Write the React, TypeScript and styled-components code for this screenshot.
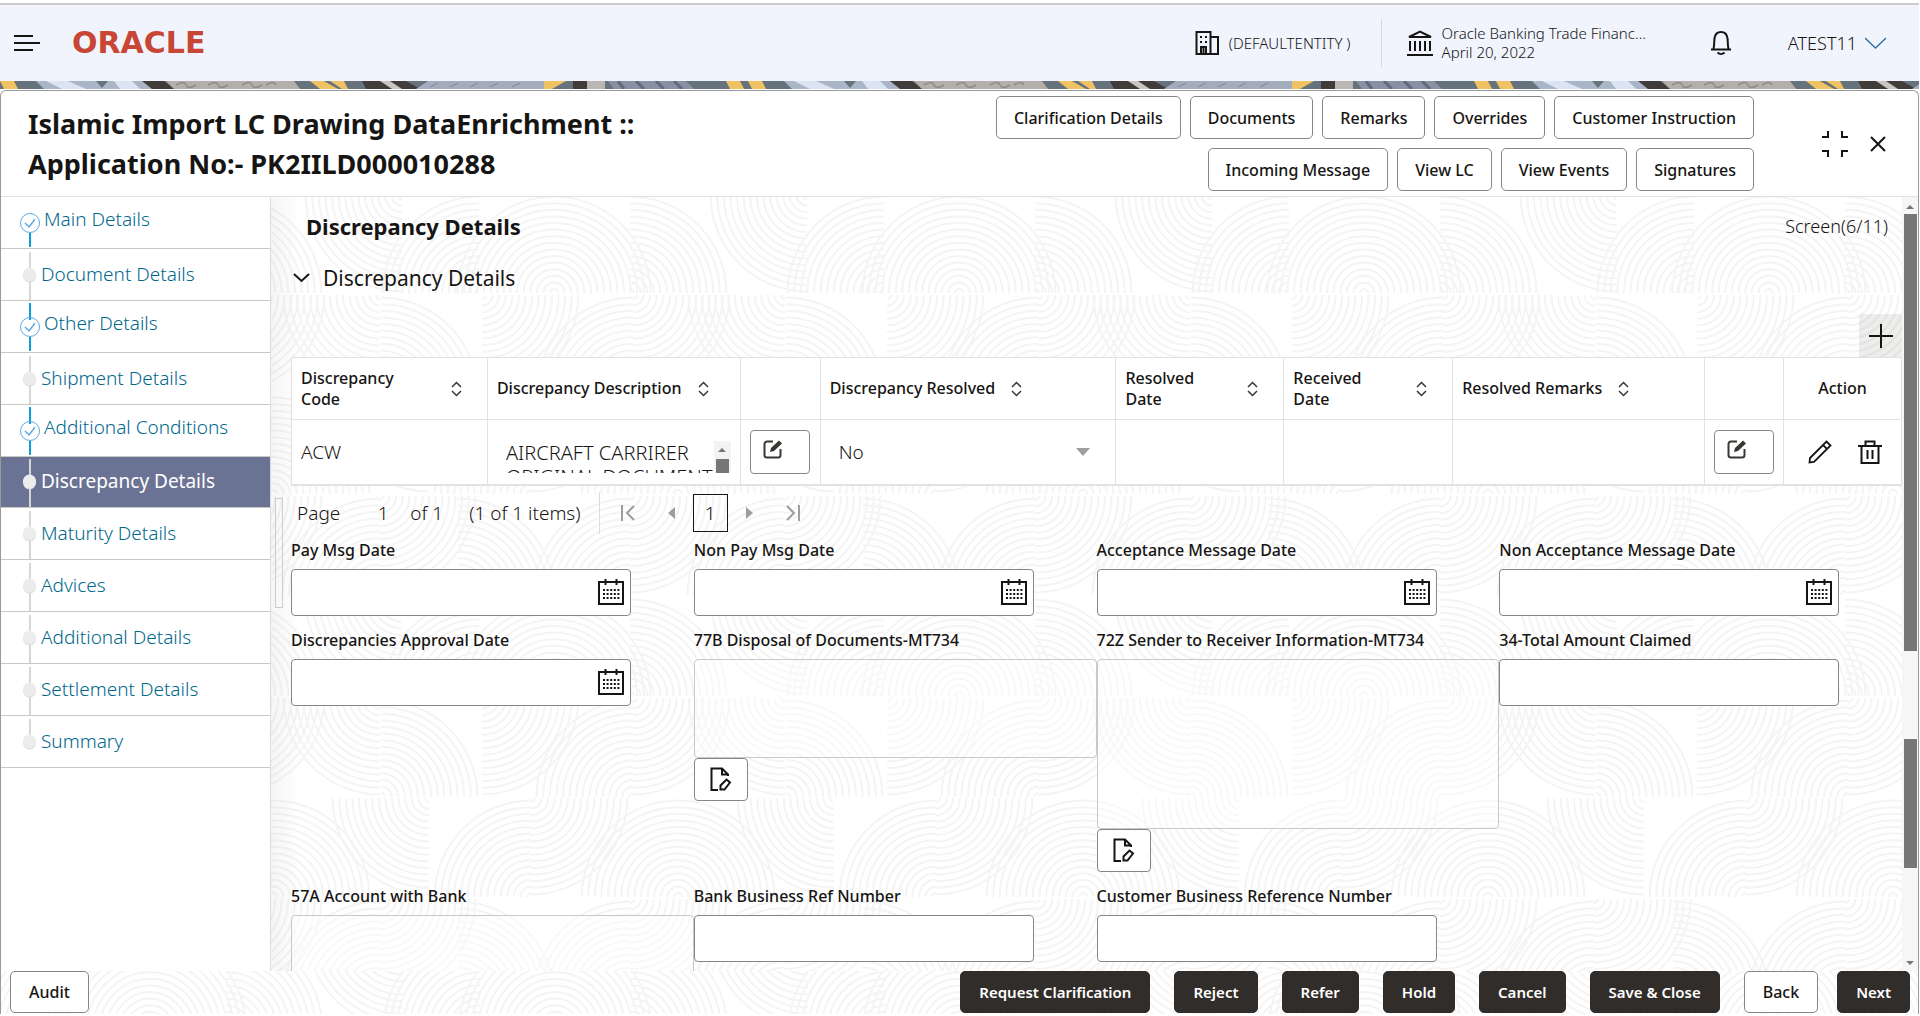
import React from 'react';
import styled, { createGlobalStyle, css } from 'styled-components';

/* ---------- decorative line pattern ---------- */

type Corner = 'ul' | 'ur' | 'dl' | 'dr';

const arcs = (cx: number, cy: number, corner: Corner) => {
  const sx = corner[1] === 'l' ? -1 : 1;
  const sy = corner[0] === 'u' ? -1 : 1;
  const sweep = sx * sy > 0 ? 1 : 0;
  let d = '';
  for (let r = 4; r < 100; r += 6.6) {
    d += `M${cx + sx * r} ${cy}A${r} ${r} 0 0 ${sweep} ${cx} ${cy + sy * r}`;
  }
  return d;
};

const quarters: [number, number, Corner][] = [
  [149, 98, 'ul'], [149, 98, 'ur'], [225, 98, 'ur'], [402, 0, 'dl'], [74, 98, 'ul'],
  [77, 100, 'dr'], [228, 199, 'ul'], [228, 100, 'dr'], [380, 100, 'dl'], [381, 199, 'ur'],
  [273, 299, 'ul'], [273, 299, 'ur'], [24, 200, 'dl'], [126, 299, 'ul'], [126, 200, 'dr'],
  [225, 301, 'dr'], [379, 400, 'ul'], [379, 301, 'dr'], [53, 400, 'ur'], [225, 400, 'ul'],
];

const tile = 405;
const patternPath = quarters
  .map(([x, y, c]) => arcs(x, y, c) + arcs(x - tile, y, c) + arcs(x + tile, y, c))
  .join('');
const pattern = `url("data:image/svg+xml,${encodeURIComponent(
  `<svg xmlns="http://www.w3.org/2000/svg" width="${tile}" height="403"><path d="${patternPath}" fill="none" stroke="#f4f4f4" stroke-width="2"/></svg>`
)}")`;

const Global = createGlobalStyle`
  * { box-sizing: border-box; }
  html, body, #root { height: 100%; }
  body {
    margin: 0;
    background: #fff;
    color: #161513;
    font-family: 'Noto Sans', 'Open Sans', sans-serif;
    font-size: 16px;
    overflow: hidden;
  }
  button, input, textarea, select { font: inherit; color: inherit; margin: 0; }
  h1, h2, h3, p { margin: 0; }
`;

/* ---------- frame ---------- */

const Page = styled.div`
  display: flex;
  flex-direction: column;
  height: 100vh;
  padding: 3px 1px 2px 0;
`;

const TopBar = styled.header`
  display: flex;
  align-items: center;
  flex: none;
  height: 78px;
  padding: 0 33px 0 14px;
  background: #f1f4fd;
  border-top: 2px solid #ccc;
`;

const IconButton = styled.button`
  display: inline-flex;
  align-items: center;
  justify-content: center;
  padding: 0;
  border: 0;
  background: none;
`;

const Logo = styled.span`
  flex: 1;
  margin-left: 32px;
  color: #c74634;
  font: 700 30px/32px 'DejaVu Sans', sans-serif;
`;

const Entity = styled.div`
  display: flex;
  align-items: center;
  gap: 10px;
  height: 48px;
  padding-right: 30px;
  border-right: 1px solid #d5d8e0;
  font-size: 15px;
  font-weight: 300;
`;

const Bank = styled.div`
  display: flex;
  align-items: center;
  gap: 9px;
  margin: 0 64px 0 25px;
  font-size: 15px;
  font-weight: 300;
  line-height: 19px;
`;

const User = styled.button`
  display: flex;
  align-items: center;
  gap: 8px;
  margin-left: 56px;
  padding: 0;
  border: 0;
  background: none;
  font-size: 18px;
  font-weight: 300;
`;

const Strip = styled.svg`
  display: block;
  flex: none;
  width: 100%;
  height: 8px;
`;

const Card = styled.div`
  display: flex;
  flex-direction: column;
  flex: 1;
  min-height: 0;
  border: 1px solid #9a9a9a;
  border-bottom: 0;
  border-radius: 6px 6px 0 0;
  margin-top: 1px;
`;

const CardHeader = styled.div`
  display: flex;
  align-items: center;
  flex: none;
  height: 106px;
  padding: 0 32px 0 27px;
  border-bottom: 1px solid #e2e2e2;
`;

const Title = styled.h1`
  flex: 1;
  max-width: 650px;
  font-size: 27px;
  font-weight: 700;
  line-height: 40px;
`;

const HeaderActions = styled.div`
  display: flex;
  flex-direction: column;
  gap: 9px;
  margin-left: auto;
  margin-right: 68px;
`;

const ActionRow = styled.div`
  display: flex;
  justify-content: flex-end;
  gap: 9px;
`;

const Button = styled.button<{ $dark?: boolean; $tight?: boolean }>`
  height: ${(p) => (p.$tight ? 42 : 43)}px;
  padding: 0 ${(p) => (p.$tight ? 18 : 17)}px;
  border: 1px solid #8b8580;
  border-radius: 5px;
  background: ${(p) => (p.$dark ? '#312d2a' : '#fff')};
  color: ${(p) => (p.$dark ? '#fff' : '#161513')};
  font-size: ${(p) => (p.$dark ? 15 : 16)}px;
  font-weight: ${(p) => (p.$dark ? 600 : 500)};
  white-space: nowrap;
  ${(p) => p.$dark && css`border-color: #312d2a;`}
`;

const WindowTools = styled.div`
  display: flex;
  align-items: center;
  gap: 22px;
`;

const Body = styled.div`
  display: flex;
  flex: 1;
  min-height: 0;
`;

/* ---------- side navigation ---------- */

const Nav = styled.nav`
  flex: none;
  width: 270px;
  border-right: 1px solid #d7dce6;
`;

const NavItem = styled.a<{ $active?: boolean; $done?: boolean }>`
  display: flex;
  align-items: center;
  gap: ${(p) => (p.$done ? 4 : 1)}px;
  height: ${(p) => (p.$active ? 51 : 52)}px;
  padding-left: 17px;
  border-bottom: 1px solid #c9c9c4;
  background: ${(p) => (p.$active ? '#6b7394' : '#fff')};
  color: ${(p) => (p.$active ? '#fff' : '#00688c')};
  font-size: 19px;
  font-weight: ${(p) => (p.$active ? 400 : 300)};
  text-decoration: none;
  span { padding-bottom: ${(p) => (p.$done ? 8 : 2)}px; }
`;

/* ---------- content ---------- */

const Main = styled.main`
  position: relative;
  flex: 1;
  min-width: 0;
  padding: 0 0 0 20px;
  overflow: hidden;
  background: linear-gradient(to right, rgba(120, 120, 120, 0.07), transparent 30px), ${pattern} -271px -2px, #fff;
`;

const Splitter = styled.div`
  position: absolute;
  left: 4px;
  top: 301px;
  width: 8px;
  height: 110px;
  border: 1px solid #ccc;
`;

const Heading = styled.div`
  display: flex;
  justify-content: space-between;
  align-items: center;
  height: 58px;
  padding: 0 14px 0 15px;
`;

const SectionTitle = styled.h2`
  font-size: 22px;
  font-weight: 700;
  line-height: 28px;
`;

const ScreenCount = styled.span`
  font-size: 18px;
  font-weight: 300;
`;

const Panel = styled.button`
  display: flex;
  align-items: center;
  gap: 13px;
  height: 46px;
  padding: 0 0 0 2px;
  border: 0;
  background: none;
  font-size: 21px;
  font-weight: 400;
`;

const TableTools = styled.div`
  display: flex;
  justify-content: flex-end;
  padding-top: 13px;
`;

const AddButton = styled(IconButton)`
  width: 43px;
  height: 43px;
  border-radius: 4px 4px 0 0;
  background: rgba(22, 21, 19, 0.08);
`;

const Table = styled.table`
  width: 100%;
  table-layout: fixed;
  border-collapse: collapse;
  background: #fff;
  border: 1px solid #e2e2e2;
  border-bottom: 2px solid #e2e2e2;
  th, td {
    padding: 0 9px;
    border-right: 1px solid #e2e2e2;
    border-bottom: 1px solid #e2e2e2;
    text-align: left;
  }
  th { height: 62px; font-size: 16px; font-weight: 500; line-height: 21px; }
  td { height: 65px; font-size: 19px; font-weight: 300; }
`;

const HeadCell = styled.div<{ $spread?: boolean; $center?: boolean }>`
  display: flex;
  align-items: center;
  gap: ${(p) => (p.$spread ? 32 : 16)}px;
  justify-content: ${(p) => (p.$center ? 'center' : p.$spread ? 'space-between' : 'flex-start')};
  padding-right: ${(p) => (p.$spread ? 16 : 0)}px;
  svg { flex: none; }
`;

const DescBox = styled.div`
  display: flex;
  height: 32px;
  margin-top: 10px;
  padding-left: 9px;
`;

const DescText = styled.textarea`
  flex: 1;
  min-width: 0;
  padding: 0;
  border: 0;
  background: none;
  resize: none;
  overflow: hidden;
  font-size: 20px;
  line-height: 24px;
  white-space: pre;
`;

const MiniScroll = styled.div`
  display: flex;
  flex-direction: column;
  align-items: center;
  gap: 7px;
  width: 17px;
  padding-top: 7px;
  background: #f3f3f3;
  &::before {
    content: '';
    border: 4px solid transparent;
    border-top: 0;
    border-bottom-color: #777;
  }
  &::after {
    content: '';
    flex: 1;
    width: 13px;
    background: #777;
  }
`;

const EditButton = styled.button`
  display: flex;
  align-items: center;
  width: 60px;
  height: 44px;
  padding: 0 0 4px 12px;
  border: 1px solid #8b8580;
  border-radius: 4px;
  background: #fff;
`;

const SelectWrap = styled.div`
  display: grid;
  align-items: center;
  padding: 0 16px 0 9px;
  > * { grid-area: 1 / 1; }
  > svg { justify-self: end; pointer-events: none; }
`;

const Select = styled.select`
  appearance: none;
  width: 100%;
  padding: 0;
  border: 0;
  background: none;
`;

const RowActions = styled.div`
  display: flex;
  gap: 26px;
  padding-left: 15px;
`;

const Pager = styled.div`
  display: flex;
  align-items: center;
  height: 54px;
  padding-left: 6px;
  font-size: 19px;
  font-weight: 300;
`;

const PageInput = styled.input`
  width: 70px;
  padding: 0 0 0 16px;
  border: 0;
  background: none;
  text-align: center;
`;

const PagerTotal = styled.span`
  margin-left: 26px;
`;

const PagerLinks = styled.div`
  display: flex;
  align-items: center;
  gap: 28px;
  height: 42px;
  margin-left: 18px;
  padding-left: 20px;
  border-left: 1px solid #ddd;
`;

const PagerGroup = styled.div`
  display: flex;
  align-items: center;
  gap: 13px;
`;

const PagerButton = styled(IconButton)`
  width: 16px;
  height: 34px;
`;

const PageNumber = styled(IconButton)`
  width: 35px;
  height: 38px;
  border: 1px solid #161513;
`;

const Form = styled.div`
  display: grid;
  grid-template-columns: repeat(4, 1fr);
  row-gap: 14px;
  align-items: start;
`;

const Field = styled.div`
  display: flex;
  flex-direction: column;
  align-items: flex-start;
`;

const Label = styled.label`
  margin-bottom: 8px;
  font-size: 16px;
  font-weight: 500;
  line-height: 21px;
  white-space: nowrap;
`;

const InputBox = styled.div`
  display: flex;
  align-items: center;
  width: 340px;
  max-width: 100%;
  height: 47px;
  padding: 0 6px;
  border: 1px solid #8b8580;
  border-radius: 4px;
  background: #fff;
`;

const Input = styled.input`
  flex: 1;
  min-width: 0;
  border: 0;
  background: none;
`;

const Area = styled.textarea<{ $height: number }>`
  display: block;
  width: 100%;
  height: ${(p) => p.$height}px;
  border: 1px solid #cbc8c6;
  border-radius: 4px;
  background: rgba(255, 255, 255, 0.4);
  resize: none;
`;

const NoteButton = styled(IconButton)`
  width: 54px;
  height: 43px;
  border: 1px solid #8b8580;
  border-radius: 4px;
  background: #fff;
`;

/* ---------- scrollbar ---------- */

const Rail = styled.div`
  display: flex;
  flex-direction: column;
  align-items: center;
  flex: none;
  width: 16px;
  padding: 8px 0 6px;
  background: #f6f6f6;
`;

const Thumb = styled.div<{ $grow: number }>`
  flex: ${(p) => p.$grow} 0 0;
  width: 13px;
  background: #777;
`;

const Space = styled.div<{ $grow: number }>`
  flex: ${(p) => p.$grow} 0 0;
`;

const Arrow = styled.i<{ $down?: boolean }>`
  flex: none;
  margin: ${(p) => (p.$down ? '0' : '0 0 5px')};
  border: 4px solid transparent;
  ${(p) =>
    p.$down
      ? css`border-bottom: 0; border-top-color: #777;`
      : css`border-top: 0; border-bottom-color: #777;`}
`;

/* ---------- footer ---------- */

const Footer = styled.footer`
  display: flex;
  align-items: flex-start;
  flex: none;
  height: 43px;
  padding: 0 8px 0 9px;
  background: ${pattern} 0 -40px, #fff;
`;

const FooterActions = styled.div`
  display: flex;
  gap: 24px;
  margin-left: auto;
`;

const Pair = styled.div`
  display: flex;
  gap: 19px;
`;

/* ---------- icons ---------- */

const line = { fill: 'none', stroke: '#161513', strokeWidth: 2 } as const;

const MenuIcon = () => (
  <svg width="26" height="18" {...line}><path d="M0 2h19M0 9h26M0 16h19" /></svg>
);

const BuildingIcon = () => (
  <svg width="24" height="24" {...line}>
    <path d="M1.5 1h14v22h-14zM15.5 6H23v17h-7.500M6 23v-7h5v7M8.500 17v6" />
    <path d="M5 6h2M10 6h2M5 11h2M10 11h2" />
  </svg>
);

const BankIcon = () => (
  <svg width="26" height="26" {...line}>
    <path d="M2 7 13 1.500 24 7zM0 25h26M3 11v10M8 11v10M13 11v10M18 11v10M23 11v10" />
  </svg>
);

const BellIcon = () => (
  <svg width="22" height="26" {...line}>
    <path d="M1 19.500h20M3.500 19c1-4 .5-7 1-10.500C5 4 8 2 11 2s6 2 6.500 6.500c.5 3.500 0 6.500 1 10.500M7.500 22.500c2 2 5 2 7 0" />
  </svg>
);

const SortIcon = () => (
  <svg width="11" height="16" fill="none" stroke="#3a3733" strokeWidth="1.500">
    <path d="M1 6l4.500-4.500L10 6M1 10l4.500 4.500L10 10" />
  </svg>
);

const EditIcon = () => (
  <svg width="20" height="21" fill="none" stroke="#3a3733" strokeWidth="2">
    <path d="M10 2.500H4a2.500 2.500 0 0 0-2.500 2.500v11A2.500 2.500 0 0 0 4 18.500h11a2.500 2.500 0 0 0 2.500-2.500v-6" />
    <path d="M7 13l1-4L16 1.500l3 3L11 12z" fill="#3a3733" stroke="none" />
  </svg>
);

const PencilIcon = () => (
  <svg width="24" height="24" fill="none" stroke="#161513" strokeWidth="1.800">
    <path d="M1.500 22.500l.5-4.500L18.500 1.500l4 4L6 22zM15 5l4 4" />
  </svg>
);

const TrashIcon = () => (
  <svg width="24" height="24" {...line}>
    <path d="M0 6h24M3.500 6v17h17V6M7.500 6V1.500h9V6M9.500 10v9M14.500 10v9" />
  </svg>
);

const CalendarIcon = () => (
  <svg width="26" height="26" {...line}>
    <path d="M1 3h24v22H1zM7.500 0v6M18.500 0v6" />
    <path d="M5 11h17M5 15h17M5 19h17" strokeDasharray="2 1.600" />
  </svg>
);

const NoteIcon = () => (
  <svg width="22" height="24" {...line}>
    <path d="M8 23H1.500V1.500H12l6 6V9M12 1.500v6h6" />
    <path d="M10.500 22.500v-4l6-6 3.500 3-5.500 7z" />
  </svg>
);

const PagerIcon = ({ kind }: { kind: 'first' | 'prev' | 'next' | 'last' }) => (
  <svg width="16" height="16" fill="none" stroke="#a09d9b" strokeWidth="2">
    {kind === 'first' && <path d="M2 0v16M14 1L7 8l7 7" />}
    {kind === 'last' && <path d="M14 0v16M2 1l7 7-7 7" />}
    {kind === 'prev' && <path d="M11 2v12L4 8z" fill="#a09d9b" stroke="none" />}
    {kind === 'next' && <path d="M5 2v12l7-6z" fill="#a09d9b" stroke="none" />}
  </svg>
);

const Marker = ({ done, first, last }: { done?: boolean; first?: boolean; last?: boolean }) =>
  done ? (
    <svg width="22" height="50" fill="none">
      <path d={first ? 'M12 35v14' : 'M12 1v17M12 35v14'} stroke="#0a9dd6" strokeWidth="2" />
      <circle cx="12" cy="25" r="9.500" stroke="#5aa7e0" />
      <path d="M7 25l4 4 6-8" stroke="#5aa7e0" strokeWidth="1.300" />
    </svg>
  ) : (
    <svg width="22" height="50" fill="none">
      <path d={last ? 'M12 2v22' : 'M12 2v48'} stroke="#d6d6d6" strokeWidth="2" />
      <ellipse cx="11.500" cy="25.500" rx="6.500" ry="7" fill="#d8d8d8" />
      <ellipse cx="11.500" cy="24.500" rx="6.500" ry="7" fill="#ececec" />
    </svg>
  );

const Banner = () => (
  <Strip aria-hidden="true">
    <defs>
      <pattern id="mosaic" width="748" height="8" patternUnits="userSpaceOnUse" x="300">
        <rect width="748" height="8" fill="#66727c" />
        <path d="M10 0h14l14 8H20zM30 0h14l4 8h-6z" fill="#f0c263" />
        <path d="M62 0h44l14 8H66z" fill="#403c39" />
        <path d="M80 0h10l12 8H92z" fill="#c8c6c3" />
        <path d="M128 0h118v8H116z" fill="#a3adbd" />
        <path d="M130 6l8-4M150 6l8-4M170 6l8-4M190 6l8-4M212 6l8-4" stroke="#7b8797" />
        <path d="M244 0h22l-14 8h-8z" fill="#f0c263" />
        <path d="M273 0h14v8h-14z" fill="#403c39" />
        <path d="M287 0h18v8h-18z" fill="#b9b6b3" />
        <path d="M308 0h78l8 8h-80z" fill="#8791a3" />
        <path d="M318 0l6 8M336 0l8 8M356 0l8 8M374 0l8 8" stroke="#5f6b78" strokeWidth="3" />
        <path d="M426 0h14l4 8h-14zM448 0h14l4 8h-14z" fill="#f0c263" />
        <path d="M484 0h110l14 8H492z" fill="#aab6c8" />
        <path d="M494 0h22l18 8h-24zM562 0h18l8 8h-20z" fill="#dbe4f3" />
        <path d="M544 0h12l-6 7z" fill="#66727c" />
        <path d="M590 0h22l10 8h-22z" fill="#403c39" />
        <path d="M614 0h128l6 8H622z" fill="#b3afab" />
        <path d="M624 4q8-5 10 0t10 0M656 4q8-5 10 0t10 0M690 4q8-5 10 0t10 0M714 4q8-5 10 0" fill="none" stroke="#8f8b87" strokeWidth="1.500" />
      </pattern>
    </defs>
    <rect width="100%" height="8" fill="url(#mosaic)" />
  </Strip>
);

/* ---------- data ---------- */

const steps = [
  { name: 'Main Details', done: true },
  { name: 'Document Details' },
  { name: 'Other Details', done: true },
  { name: 'Shipment Details' },
  { name: 'Additional Conditions', done: true },
  { name: 'Discrepancy Details', active: true },
  { name: 'Maturity Details' },
  { name: 'Advices' },
  { name: 'Additional Details' },
  { name: 'Settlement Details' },
  { name: 'Summary' },
];

const headerButtons = [
  ['Clarification Details', 'Documents', 'Remarks', 'Overrides', 'Customer Instruction'],
  ['Incoming Message', 'View LC', 'View Events', 'Signatures'],
];

const columns: { label: string; width: number; spread?: boolean }[] = [
  { label: 'Discrepancy Code', width: 196, spread: true },
  { label: 'Discrepancy Description', width: 253 },
  { label: '', width: 80 },
  { label: 'Discrepancy Resolved', width: 296 },
  { label: 'Resolved Date', width: 168, spread: true },
  { label: 'Received Date', width: 169, spread: true },
  { label: 'Resolved Remarks', width: 252 },
  { label: '', width: 79 },
  { label: 'Action', width: 118 },
];

type FieldDef = { id: string; label: string; kind: 'date' | 'text' | 'area'; height?: number; note?: boolean };

const fields: FieldDef[] = [
  { id: 'pay', label: 'Pay Msg Date', kind: 'date' },
  { id: 'nonpay', label: 'Non Pay Msg Date', kind: 'date' },
  { id: 'acc', label: 'Acceptance Message Date', kind: 'date' },
  { id: 'nonacc', label: 'Non Acceptance Message Date', kind: 'date' },
  { id: 'approval', label: 'Discrepancies Approval Date', kind: 'date' },
  { id: 'f77b', label: '77B Disposal of Documents-MT734', kind: 'area', height: 99, note: true },
  { id: 'f72z', label: '72Z Sender to Receiver Information-MT734', kind: 'area', height: 170, note: true },
  { id: 'f34', label: '34-Total Amount Claimed', kind: 'text' },
  { id: 'f57a', label: '57A Account with Bank', kind: 'area', height: 99 },
  { id: 'bankref', label: 'Bank Business Ref Number', kind: 'text' },
  { id: 'custref', label: 'Customer Business Reference Number', kind: 'text' },
];

const FormField = ({ id, label, kind, height = 99, note }: FieldDef) => (
  <Field>
    <Label htmlFor={id}>{label}</Label>
    {kind === 'area' ? (
      <Area id={id} $height={height} />
    ) : (
      <InputBox>
        <Input id={id} type="text" />
        {kind === 'date' && (
          <IconButton type="button" aria-label={`Choose ${label}`}><CalendarIcon /></IconButton>
        )}
      </InputBox>
    )}
    {note && <NoteButton type="button" aria-label={`Edit ${label}`}><NoteIcon /></NoteButton>}
  </Field>
);

export default function App() {
  return (
    <>
      <Global />
      <Page>
        <TopBar>
          <IconButton type="button" aria-label="Menu"><MenuIcon /></IconButton>
          <Logo>ORACLE</Logo>
          <Entity><BuildingIcon />(DEFAULTENTITY )</Entity>
          <Bank>
            <BankIcon />
            <div>
              <p>Oracle Banking Trade Financ…</p>
              <p>April 20, 2022</p>
            </div>
          </Bank>
          <IconButton type="button" aria-label="Notifications"><BellIcon /></IconButton>
          <User type="button">
            ATEST11
            <svg width="21" height="12" fill="none" stroke="#2c6e9e" strokeWidth="1.300"><path d="M0 1l10.500 10L21 1" /></svg>
          </User>
        </TopBar>
        <Banner />
        <Card>
          <CardHeader>
            <Title>Islamic Import LC Drawing DataEnrichment ::<br />Application No:- PK2IILD000010288</Title>
            <HeaderActions>
              {headerButtons.map((row, i) => (
                <ActionRow key={i}>
                  {row.map((b) => <Button key={b} type="button">{b}</Button>)}
                </ActionRow>
              ))}
            </HeaderActions>
            <WindowTools>
              <IconButton type="button" aria-label="Collapse">
                <svg width="26" height="26" {...line}><path d="M0 6h6V0M20 0v6h6M0 20h6v6M20 26v-6h6" /></svg>
              </IconButton>
              <IconButton type="button" aria-label="Close">
                <svg width="16" height="16" {...line}><path d="M1 1l14 14M15 1L1 15" /></svg>
              </IconButton>
            </WindowTools>
          </CardHeader>
          <Body>
            <Nav>
              {steps.map((s, i) => (
                <NavItem key={s.name} href="#" $active={s.active} $done={s.done}>
                  <Marker done={s.done} first={i === 0} last={i === steps.length - 1} />
                  <span>{s.name}</span>
                </NavItem>
              ))}
            </Nav>
            <Main>
              <Splitter />
              <Heading>
                <SectionTitle>Discrepancy Details</SectionTitle>
                <ScreenCount>Screen(6/11)</ScreenCount>
              </Heading>
              <Panel type="button">
                <svg width="17" height="10" {...line}><path d="M1 1l7.500 7L16 1" /></svg>
                Discrepancy Details
              </Panel>
              <TableTools>
                <AddButton type="button" aria-label="Add row">
                  <svg width="24" height="24" {...line}><path d="M12 0v24M0 12h24" /></svg>
                </AddButton>
              </TableTools>
              <Table>
                <colgroup>
                  {columns.map((c, i) => <col key={i} style={{ width: `${(c.width / 1611) * 100}%` }} />)}
                </colgroup>
                <thead>
                  <tr>
                    {columns.map((c, i) => (
                      <th key={i} scope="col">
                        {c.label && (
                          <HeadCell $spread={c.spread} $center={c.label === 'Action'}>
                            {c.label}
                            {c.label !== 'Action' && <SortIcon />}
                          </HeadCell>
                        )}
                      </th>
                    ))}
                  </tr>
                </thead>
                <tbody>
                  <tr>
                    <td>ACW</td>
                    <td>
                      <DescBox>
                        <DescText aria-label="Description" readOnly value={'AIRCRAFT CARRIRER\nORIGINAL DOCUMENT'} />
                        <MiniScroll />
                      </DescBox>
                    </td>
                    <td><EditButton type="button" aria-label="Edit description"><EditIcon /></EditButton></td>
                    <td>
                      <SelectWrap>
                        <Select aria-label="Discrepancy resolved" defaultValue="No">
                          <option>No</option>
                          <option>Yes</option>
                        </Select>
                        <svg width="14" height="8" fill="#a09d9b"><path d="M0 0h14L7 8z" /></svg>
                      </SelectWrap>
                    </td>
                    <td />
                    <td />
                    <td />
                    <td><EditButton type="button" aria-label="Edit remarks"><EditIcon /></EditButton></td>
                    <td>
                      <RowActions>
                        <IconButton type="button" aria-label="Edit row"><PencilIcon /></IconButton>
                        <IconButton type="button" aria-label="Delete row"><TrashIcon /></IconButton>
                      </RowActions>
                    </td>
                  </tr>
                </tbody>
              </Table>
              <Pager>
                <label htmlFor="page">Page</label>
                <PageInput id="page" defaultValue="1" />
                <span>of 1</span>
                <PagerTotal>(1 of 1 items)</PagerTotal>
                <PagerLinks>
                  <PagerButton type="button" aria-label="First page"><PagerIcon kind="first" /></PagerButton>
                  <PagerGroup>
                    <PagerButton type="button" aria-label="Previous page"><PagerIcon kind="prev" /></PagerButton>
                    <PageNumber type="button">1</PageNumber>
                    <PagerButton type="button" aria-label="Next page"><PagerIcon kind="next" /></PagerButton>
                  </PagerGroup>
                  <PagerButton type="button" aria-label="Last page"><PagerIcon kind="last" /></PagerButton>
                </PagerLinks>
              </Pager>
              <Form>
                {fields.map((f) => <FormField key={f.id} {...f} />)}
              </Form>
            </Main>
            <Rail>
              <Arrow />
              <Thumb $grow={436} />
              <Space $grow={88} />
              <Thumb $grow={129} />
              <Space $grow={93} />
              <Arrow $down />
            </Rail>
          </Body>
          <Footer>
            <Button type="button" $tight>Audit</Button>
            <FooterActions>
              {['Request Clarification', 'Reject', 'Refer', 'Hold', 'Cancel', 'Save & Close'].map((b) => (
                <Button key={b} type="button" $dark $tight>{b}</Button>
              ))}
              <Pair>
                <Button type="button" $tight>Back</Button>
                <Button type="button" $dark $tight>Next</Button>
              </Pair>
            </FooterActions>
          </Footer>
        </Card>
      </Page>
    </>
  );
}
